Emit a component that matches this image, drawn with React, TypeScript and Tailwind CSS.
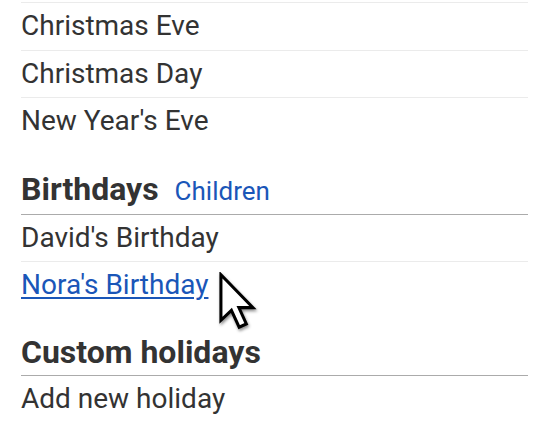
import React from 'react';

const Row = ({ children, last }: { children: React.ReactNode; last?: boolean }) => (
  <div className={`text-[28px] leading-[46.5px] text-[#333] ${last ? '' : 'border-b border-[#ebebeb]'}`}>
    {children}
  </div>
);

const Heading = ({ title, extra, className }: { title: string; extra?: string; className: string }) => (
  <div className={`border-b border-[#ababab] flex items-baseline ${className}`}>
    <span className="text-[32px] leading-[40px] font-bold text-[#333]">{title}</span>
    {extra && <a className="ml-[16px] text-[26px] text-[#1a56b8] cursor-pointer">{extra}</a>}
  </div>
);

const Cursor = () => (
  <svg
    className="absolute left-[217px] top-[272px]"
    width="41"
    height="58"
    viewBox="0 0 14 21"
    style={{ filter: 'drop-shadow(1px 2px 1.5px rgba(0,0,0,0.45))' }}
  >
    <path
      d="M1 1 L1 17.5 L4.8 13.9 L7.6 20 L10.2 18.8 L7.5 12.9 L12.6 12.9 Z"
      fill="#fff"
      stroke="#000"
      strokeWidth="1.1"
      strokeLinejoin="miter"
    />
  </svg>
);

export default function App() {
  return (
    <div
      className="relative w-[552px] h-[428px] bg-white overflow-hidden"
      style={{ fontFamily: 'Roboto, "Liberation Sans", sans-serif' }}
    >
      <div className="ml-[21px] w-[507px] pt-[2px]">
        <div className="border-t border-[#ebebeb]">
          <Row>Christmas Eve</Row>
          <Row>Christmas Day</Row>
          <Row last>New Year's Eve</Row>
        </div>

        <Heading title="Birthdays" extra="Children" className="mt-[24px] pb-[3px]" />
        <Row>David's Birthday</Row>
        <Row last>
          <a className="text-[#1a56b8] underline underline-offset-[3px] decoration-[2px] cursor-pointer">
            Nora's Birthday
          </a>
        </Row>

        <Heading title="Custom holidays" className="mt-[23px] pb-[3px]" />
        <Row last>Add new holiday</Row>
      </div>
      <Cursor />
    </div>
  );
}
